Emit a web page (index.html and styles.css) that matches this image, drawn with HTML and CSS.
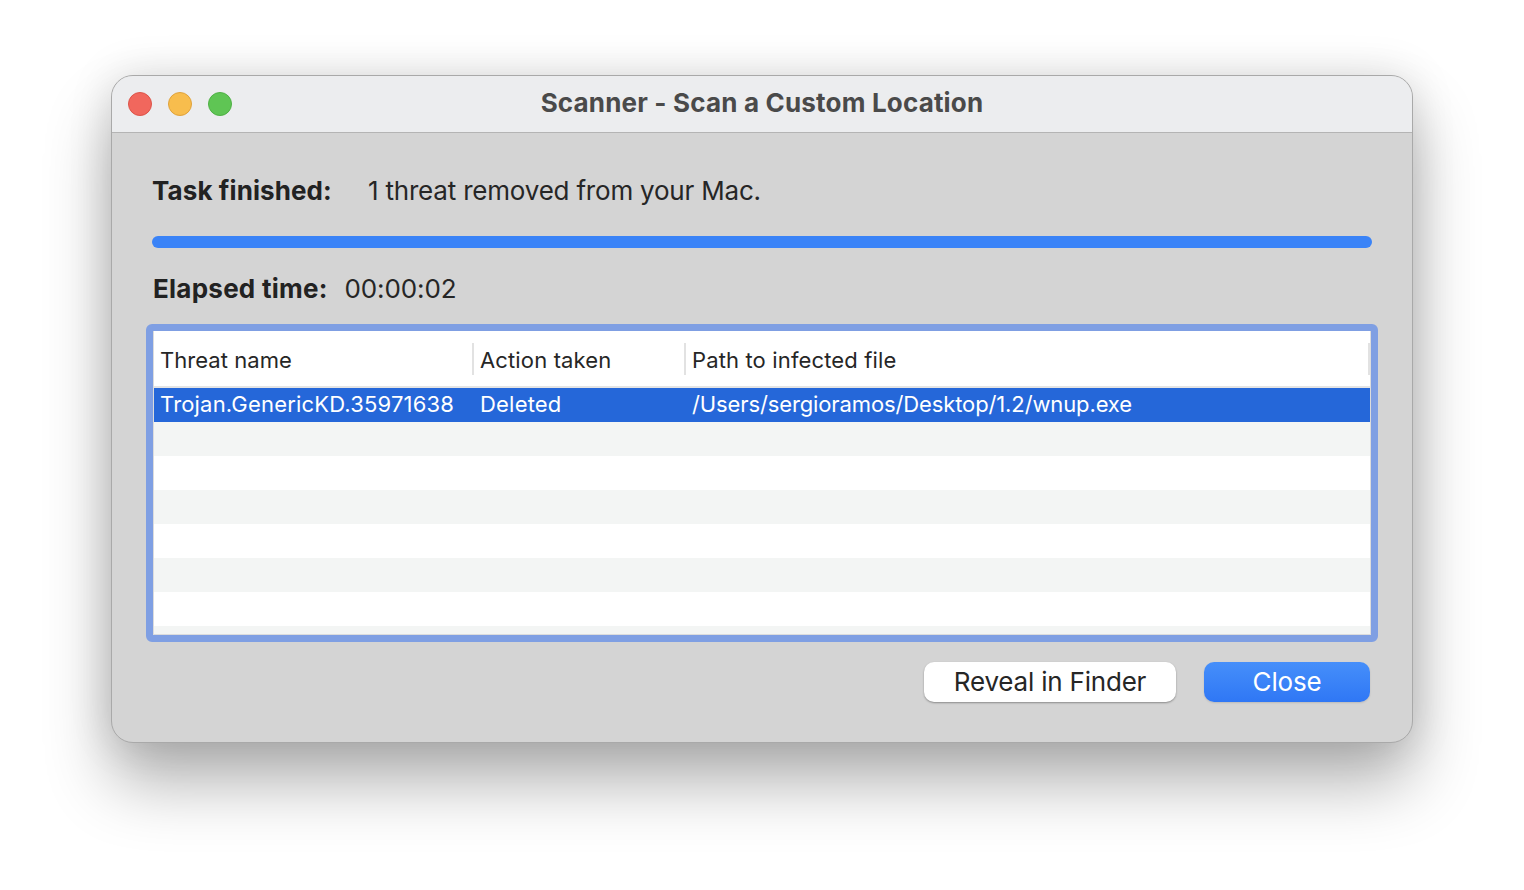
FILE: index.html
```html
<!DOCTYPE html>
<html lang="en">
<head>
<meta charset="utf-8">
<title>Scanner - Scan a Custom Location</title>
<link rel="stylesheet" href="styles.css">
</head>
<body>
<main class="window">
  <header class="titlebar">
    <div class="lights">
      <span class="light red"></span>
      <span class="light yellow"></span>
      <span class="light green"></span>
    </div>
    <h1 class="title">Scanner - Scan a Custom Location</h1>
  </header>
  <section class="content">
    <div class="status-row">
      <strong class="label task-label">Task finished:</strong>
      <span class="value status-value">1 threat removed from your Mac.</span>
    </div>
    <div class="progress"></div>
    <div class="elapsed-row">
      <strong class="label elapsed-label">Elapsed time:</strong>
      <span class="value">00:00:02</span>
    </div>
    <div class="table-ring">
      <div class="table">
        <div class="thead">
          <div class="th col-a">Threat name</div>
          <div class="th col-b">Action taken</div>
          <div class="th col-c">Path to infected file</div>
        </div>
        <div class="row selected">
          <div class="td col-a">Trojan.GenericKD.35971638</div>
          <div class="td col-b">Deleted</div>
          <div class="td col-c">/Users/sergioramos/Desktop/1.2/wnup.exe</div>
        </div>
        <div class="row alt"></div>
        <div class="row"></div>
        <div class="row alt"></div>
        <div class="row"></div>
        <div class="row alt"></div>
        <div class="row"></div>
        <div class="row alt last"></div>
      </div>
    </div>
    <div class="actions">
      <button class="btn secondary">Reveal in Finder</button>
      <button class="btn primary">Close</button>
    </div>
  </section>
</main>
</body>
</html>
```
FILE: styles.css
```css
* { box-sizing: border-box; }
html, body { margin: 0; height: 100%; }
body {
  background: #fff;
  font-family: "Inter", "Liberation Sans", sans-serif;
  color: #222;
  display: flex;
  justify-content: center;
  align-items: flex-start;
  padding-top: 75px;
  overflow: hidden;
}
.window {
  width: 1302px;
  height: 668px;
  border: 1px solid #a9a9a9;
  border-radius: 22px;
  background: #d4d4d4;
  overflow: hidden;
  box-shadow: 0 40px 66px rgba(0, 0, 0, 0.30), 0 0 44px rgba(0, 0, 0, 0.13);
}
.titlebar {
  height: 57px;
  background: #ecedef;
  border-bottom: 1px solid #b4b4b4;
  display: flex;
  align-items: center;
  position: relative;
  padding-left: 16px;
}
.lights { display: flex; gap: 16px; }
.light {
  width: 24px;
  height: 24px;
  border-radius: 50%;
  border: 1px solid;
}
.red { background: #f1675d; border-color: #dc5449; }
.yellow { background: #f8bd4d; border-color: #dfa23c; }
.green { background: #5fc554; border-color: #4fb045; }
.title {
  position: absolute;
  left: 0;
  right: 0;
  margin: 0;
  padding-bottom: 3px;
  text-align: center;
  font-size: 26px;
  font-weight: 700;
  letter-spacing: 0.18px;
  color: #4a4a4a;
}
.content { padding: 0 34px; }
.status-row {
  height: 30px;
  margin-top: 42px;
  margin-left: 6px;
  display: flex;
  align-items: center;
  font-size: 26px;
}
.label { font-weight: 700; color: #222; flex: none; }
.task-label { width: 216px; letter-spacing: 0.1px; }
.elapsed-label { width: 191.5px; letter-spacing: 0.25px; }
.value { letter-spacing: -0.1px; white-space: nowrap; color: #262626; }
.status-value { letter-spacing: -0.2px; }
.progress {
  height: 12px;
  margin: 31px 6px 0;
  border-radius: 6px;
  background: #3a83f7;
}
.elapsed-row {
  height: 30px;
  margin-top: 25px;
  margin-left: 7px;
  display: flex;
  align-items: center;
  font-size: 26px;
}
.table-ring {
  margin-top: 21px;
  height: 318px;
  border: 7px solid #7f9fe3;
  border-radius: 6px;
  background: #fff;
}
.table {
  height: 100%;
  overflow: hidden;
  font-size: 22px;
  border: 1px solid #dcdcdc;
  border-top: 0;
}
.thead {
  height: 57px;
  display: flex;
  align-items: center;
  border-bottom: 2px solid #e4e4e4;
  background: #fff;
  padding-top: 1px;
}
.th, .td { padding-left: 6px; white-space: nowrap; }
.th { letter-spacing: 0.14px; }
.th.col-a { letter-spacing: 0.05px; }
.td.col-a { letter-spacing: 0.18px; }
.td.col-b { letter-spacing: 0.2px; }
.td.col-c { letter-spacing: -0.12px; }
.th {
  height: 32px;
  line-height: 34px;
  border-right: 2px solid #e2e2e2;
  color: #262626;
}
.col-a { width: 320px; flex: none; }
.col-b { width: 212px; flex: none; }
.col-c { flex: 1; }
.row { height: 34px; display: flex; align-items: center; background: #fff; }
.row.alt { background: #f3f5f4; }
.row.last { height: 8px; }
.row.selected { background: #2567d9; color: #fff; padding-bottom: 2px; }
.actions {
  display: flex;
  justify-content: flex-end;
  gap: 28px;
  margin-top: 20px;
  padding-right: 8px;
}
.btn {
  height: 40px;
  border: 0;
  border-radius: 10px;
  font-family: inherit;
  font-size: 26px;
  letter-spacing: -0.2px;
  padding: 0 0 2px;
}
.secondary {
  width: 252px;
  background: #fff;
  color: #262626;
  box-shadow: 0 1px 2px rgba(0, 0, 0, 0.35);
}
.primary {
  width: 166px;
  background: linear-gradient(#468ffa, #2f77f5);
  color: #fff;
  box-shadow: 0 1px 2px rgba(0, 0, 0, 0.12);
}
```
